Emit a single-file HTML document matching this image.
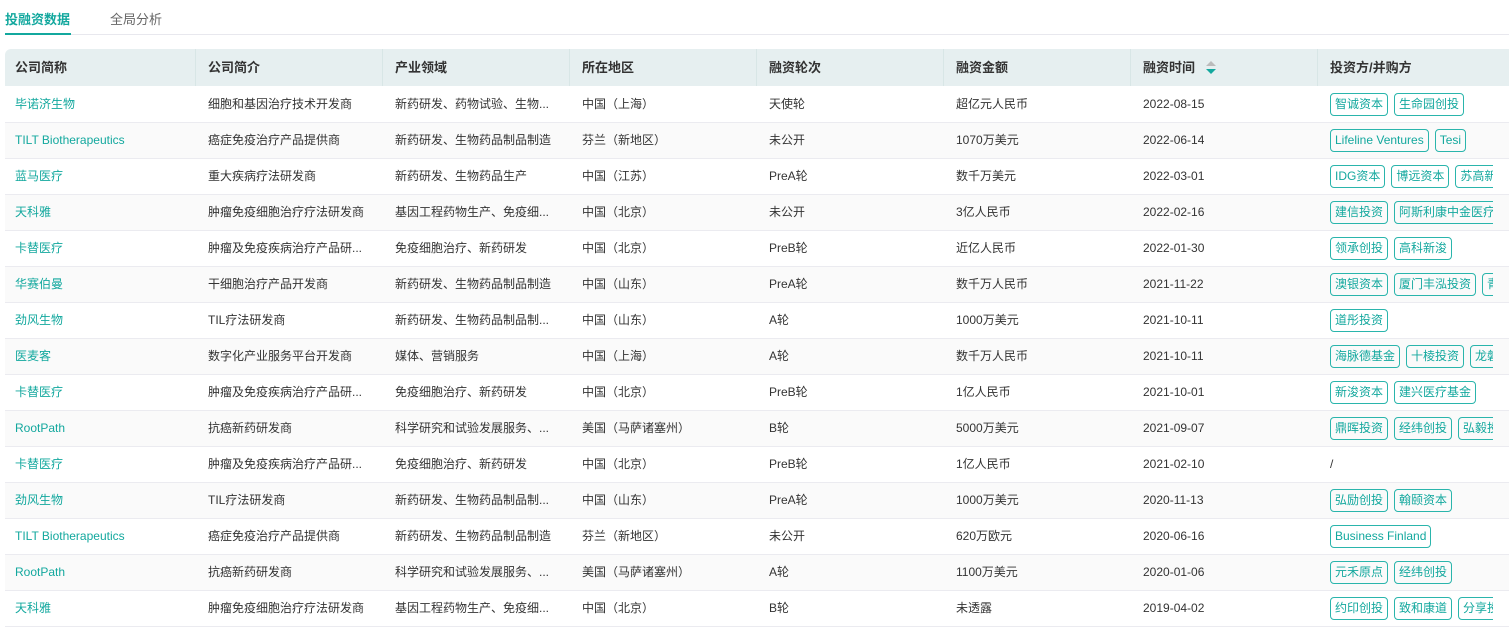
<!DOCTYPE html>
<html><head><meta charset="utf-8"><style>
*{margin:0;padding:0;box-sizing:border-box}
body{width:1509px;height:622px;overflow:hidden;background:#fff;font-family:"Liberation Sans","Noto Sans CJK SC",sans-serif;font-size:12px;color:#333;position:relative}
.tabs{position:absolute;left:5px;top:0;width:1504px;height:35px;border-bottom:1px solid #e8e8ee}
.tab{position:absolute;top:9px;font-size:13px;color:#666;white-space:nowrap}
.t1{left:0;color:#13a89e;font-weight:bold;height:26px;border-bottom:2px solid #13a89e;width:66px}
.t2{left:105px}
.hd{position:absolute;left:5px;top:49px;width:1504px;height:37px;background:#e6eff0;border-radius:6px 0 0 0}
.hd div{position:absolute;top:0;height:37px;line-height:37px;font-weight:bold;font-size:13px;color:#333;white-space:nowrap}
.hd i{position:absolute;top:0;width:1px;height:37px;background:#d8e6e6}
.row{position:absolute;left:5px;width:1504px;height:36px;border-bottom:1px solid #ebebf0}
.row.g{background:#fafafa}
.c{position:absolute;top:0;height:35px;line-height:35px;white-space:nowrap;overflow:hidden}
.n{color:#13a89e}
.tags{position:absolute;left:1325px;top:0;width:163px;height:35px;overflow:hidden;white-space:nowrap}
.tag{display:inline-block;margin-top:6px;margin-right:6px;height:23px;line-height:21px;padding:0 4px;border:1px solid #2ab5ac;border-radius:4px;color:#13a89e;font-size:12px}
.sort{position:absolute;left:1206px;top:61px}
</style></head><body>
<div class="tabs"><div class="tab t1">投融资数据</div><div class="tab t2">全局分析</div></div>
<div class="hd">
<div style="left:10px">公司简称</div><i style="left:190px"></i>
<div style="left:203px">公司简介</div><i style="left:377px"></i>
<div style="left:390px">产业领域</div><i style="left:564px"></i>
<div style="left:577px">所在地区</div><i style="left:751px"></i>
<div style="left:764px">融资轮次</div><i style="left:938px"></i>
<div style="left:951px">融资金额</div><i style="left:1125px"></i>
<div style="left:1138px">融资时间</div><i style="left:1312px"></i>
<div style="left:1325px">投资方/并购方</div>
</div>
<svg class="sort" width="10" height="14"><path d="M0 5 L5 0 L10 5Z" fill="#bbb"/><path d="M0 8 L10 8 L5 13Z" fill="#13a89e"/></svg>
<div class="row" style="top:87px"><div class="c n" style="left:10px">毕诺济生物</div><div class="c" style="left:203px">细胞和基因治疗技术开发商</div><div class="c" style="left:390px">新药研发、药物试验、生物...</div><div class="c" style="left:577px">中国（上海）</div><div class="c" style="left:764px">天使轮</div><div class="c" style="left:951px">超亿元人民币</div><div class="c" style="left:1138px">2022-08-15</div><div class="tags"><span class="tag">智诚资本</span><span class="tag">生命园创投</span></div></div>
<div class="row g" style="top:123px"><div class="c n" style="left:10px">TILT Biotherapeutics</div><div class="c" style="left:203px">癌症免疫治疗产品提供商</div><div class="c" style="left:390px">新药研发、生物药品制品制造</div><div class="c" style="left:577px">芬兰（新地区）</div><div class="c" style="left:764px">未公开</div><div class="c" style="left:951px">1070万美元</div><div class="c" style="left:1138px">2022-06-14</div><div class="tags"><span class="tag">Lifeline Ventures</span><span class="tag">Tesi</span></div></div>
<div class="row" style="top:159px"><div class="c n" style="left:10px">蓝马医疗</div><div class="c" style="left:203px">重大疾病疗法研发商</div><div class="c" style="left:390px">新药研发、生物药品生产</div><div class="c" style="left:577px">中国（江苏）</div><div class="c" style="left:764px">PreA轮</div><div class="c" style="left:951px">数千万美元</div><div class="c" style="left:1138px">2022-03-01</div><div class="tags"><span class="tag">IDG资本</span><span class="tag">博远资本</span><span class="tag">苏高新创投</span></div></div>
<div class="row g" style="top:195px"><div class="c n" style="left:10px">天科雅</div><div class="c" style="left:203px">肿瘤免疫细胞治疗疗法研发商</div><div class="c" style="left:390px">基因工程药物生产、免疫细...</div><div class="c" style="left:577px">中国（北京）</div><div class="c" style="left:764px">未公开</div><div class="c" style="left:951px">3亿人民币</div><div class="c" style="left:1138px">2022-02-16</div><div class="tags"><span class="tag">建信投资</span><span class="tag">阿斯利康中金医疗</span></div></div>
<div class="row" style="top:231px"><div class="c n" style="left:10px">卡替医疗</div><div class="c" style="left:203px">肿瘤及免疫疾病治疗产品研...</div><div class="c" style="left:390px">免疫细胞治疗、新药研发</div><div class="c" style="left:577px">中国（北京）</div><div class="c" style="left:764px">PreB轮</div><div class="c" style="left:951px">近亿人民币</div><div class="c" style="left:1138px">2022-01-30</div><div class="tags"><span class="tag">领承创投</span><span class="tag">高科新浚</span></div></div>
<div class="row g" style="top:267px"><div class="c n" style="left:10px">华赛伯曼</div><div class="c" style="left:203px">干细胞治疗产品开发商</div><div class="c" style="left:390px">新药研发、生物药品制品制造</div><div class="c" style="left:577px">中国（山东）</div><div class="c" style="left:764px">PreA轮</div><div class="c" style="left:951px">数千万人民币</div><div class="c" style="left:1138px">2021-11-22</div><div class="tags"><span class="tag">澳银资本</span><span class="tag">厦门丰泓投资</span><span class="tag">青岛</span></div></div>
<div class="row" style="top:303px"><div class="c n" style="left:10px">劲风生物</div><div class="c" style="left:203px">TIL疗法研发商</div><div class="c" style="left:390px">新药研发、生物药品制品制...</div><div class="c" style="left:577px">中国（山东）</div><div class="c" style="left:764px">A轮</div><div class="c" style="left:951px">1000万美元</div><div class="c" style="left:1138px">2021-10-11</div><div class="tags"><span class="tag">道彤投资</span></div></div>
<div class="row g" style="top:339px"><div class="c n" style="left:10px">医麦客</div><div class="c" style="left:203px">数字化产业服务平台开发商</div><div class="c" style="left:390px">媒体、营销服务</div><div class="c" style="left:577px">中国（上海）</div><div class="c" style="left:764px">A轮</div><div class="c" style="left:951px">数千万人民币</div><div class="c" style="left:1138px">2021-10-11</div><div class="tags"><span class="tag">海脉德基金</span><span class="tag">十棱投资</span><span class="tag">龙磐</span></div></div>
<div class="row" style="top:375px"><div class="c n" style="left:10px">卡替医疗</div><div class="c" style="left:203px">肿瘤及免疫疾病治疗产品研...</div><div class="c" style="left:390px">免疫细胞治疗、新药研发</div><div class="c" style="left:577px">中国（北京）</div><div class="c" style="left:764px">PreB轮</div><div class="c" style="left:951px">1亿人民币</div><div class="c" style="left:1138px">2021-10-01</div><div class="tags"><span class="tag">新浚资本</span><span class="tag">建兴医疗基金</span></div></div>
<div class="row g" style="top:411px"><div class="c n" style="left:10px">RootPath</div><div class="c" style="left:203px">抗癌新药研发商</div><div class="c" style="left:390px">科学研究和试验发展服务、...</div><div class="c" style="left:577px">美国（马萨诸塞州）</div><div class="c" style="left:764px">B轮</div><div class="c" style="left:951px">5000万美元</div><div class="c" style="left:1138px">2021-09-07</div><div class="tags"><span class="tag">鼎晖投资</span><span class="tag">经纬创投</span><span class="tag">弘毅投资</span></div></div>
<div class="row" style="top:447px"><div class="c n" style="left:10px">卡替医疗</div><div class="c" style="left:203px">肿瘤及免疫疾病治疗产品研...</div><div class="c" style="left:390px">免疫细胞治疗、新药研发</div><div class="c" style="left:577px">中国（北京）</div><div class="c" style="left:764px">PreB轮</div><div class="c" style="left:951px">1亿人民币</div><div class="c" style="left:1138px">2021-02-10</div><div class="tags"><span style="line-height:35px">/</span></div></div>
<div class="row g" style="top:483px"><div class="c n" style="left:10px">劲风生物</div><div class="c" style="left:203px">TIL疗法研发商</div><div class="c" style="left:390px">新药研发、生物药品制品制...</div><div class="c" style="left:577px">中国（山东）</div><div class="c" style="left:764px">PreA轮</div><div class="c" style="left:951px">1000万美元</div><div class="c" style="left:1138px">2020-11-13</div><div class="tags"><span class="tag">弘励创投</span><span class="tag">翰颐资本</span></div></div>
<div class="row" style="top:519px"><div class="c n" style="left:10px">TILT Biotherapeutics</div><div class="c" style="left:203px">癌症免疫治疗产品提供商</div><div class="c" style="left:390px">新药研发、生物药品制品制造</div><div class="c" style="left:577px">芬兰（新地区）</div><div class="c" style="left:764px">未公开</div><div class="c" style="left:951px">620万欧元</div><div class="c" style="left:1138px">2020-06-16</div><div class="tags"><span class="tag">Business Finland</span></div></div>
<div class="row g" style="top:555px"><div class="c n" style="left:10px">RootPath</div><div class="c" style="left:203px">抗癌新药研发商</div><div class="c" style="left:390px">科学研究和试验发展服务、...</div><div class="c" style="left:577px">美国（马萨诸塞州）</div><div class="c" style="left:764px">A轮</div><div class="c" style="left:951px">1100万美元</div><div class="c" style="left:1138px">2020-01-06</div><div class="tags"><span class="tag">元禾原点</span><span class="tag">经纬创投</span></div></div>
<div class="row" style="top:591px"><div class="c n" style="left:10px">天科雅</div><div class="c" style="left:203px">肿瘤免疫细胞治疗疗法研发商</div><div class="c" style="left:390px">基因工程药物生产、免疫细...</div><div class="c" style="left:577px">中国（北京）</div><div class="c" style="left:764px">B轮</div><div class="c" style="left:951px">未透露</div><div class="c" style="left:1138px">2019-04-02</div><div class="tags"><span class="tag">约印创投</span><span class="tag">致和康道</span><span class="tag">分享投资</span></div></div>
</body></html>
